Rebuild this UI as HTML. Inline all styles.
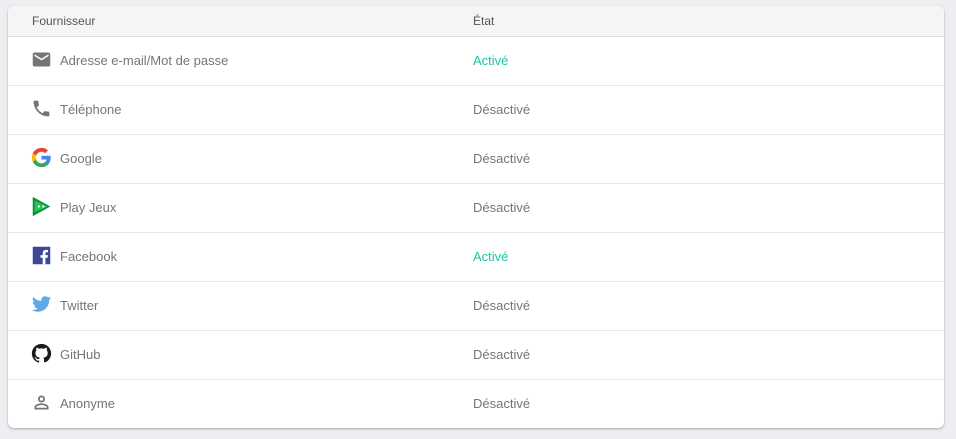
<!DOCTYPE html>
<html><head><style>
body{margin:0;background:#eceef1;font-family:"Liberation Sans",sans-serif;width:956px;height:439px;overflow:hidden}
.card{position:absolute;left:8px;top:6px;width:936px;height:422px;background:#fff;border-radius:6px;box-shadow:0 1px 2px rgba(0,0,0,.3);overflow:hidden}
.hd{height:30px;background:#f5f5f5;border-bottom:1px solid #ddd;font-size:12px;color:#555;position:relative}
.hd span{position:absolute;top:8px}
.row{height:48px;border-bottom:1px solid #e8e8e8;position:relative;font-size:13px;color:#757575}
.row:last-child{border-bottom:none}
.row svg{position:absolute;left:23px;top:12px;width:21px;height:21px}
.n{position:absolute;left:52px;top:16px}
.s{position:absolute;left:465px;top:16px}
.on{color:#1bc5a4}
</style></head><body>
<div class="card">
<div class="hd"><span style="left:24px">Fournisseur</span><span style="left:465px">État</span></div>
<div class="row"><svg viewBox="0 0 24 24"><path fill="#757575" d="M20 4H4c-1.1 0-2 .9-2 2v12c0 1.1.9 2 2 2h16c1.1 0 2-.9 2-2V6c0-1.1-.9-2-2-2zm0 4l-8 5-8-5V6l8 5 8-5v2z"/></svg><span class="n">Adresse e-mail/Mot de passe</span><span class="s on">Activé</span></div>
<div class="row"><svg viewBox="0 0 24 24"><path fill="#757575" d="M6.6 10.8c1.4 2.8 3.8 5.1 6.6 6.6l2.2-2.2c.3-.3.7-.4 1-.2 1.1.4 2.3.6 3.6.6.6 0 1 .4 1 1V20c0 .6-.4 1-1 1C10.6 21 3 13.4 3 4c0-.6.4-1 1-1h3.5c.6 0 1 .4 1 1 0 1.3.2 2.5.6 3.6.1.3 0 .7-.2 1L6.6 10.8z"/></svg><span class="n">Téléphone</span><span class="s">Désactivé</span></div>
<div class="row"><svg viewBox="0 0 24 24"><path fill="#4285F4" d="M22.5 12.2c0-.8-.1-1.5-.2-2.2H12v4.3h5.9c-.3 1.4-1 2.5-2.2 3.3v2.7h3.6c2-1.9 3.2-4.7 3.2-8.1z"/><path fill="#34A853" d="M12 23c3 0 5.5-1 7.3-2.7l-3.6-2.7c-1 .7-2.200 1.1-3.7 1.1-2.9 0-5.3-1.9-6.2-4.5H2.1v2.8C3.9 20.6 7.7 23 12 23z"/><path fill="#FBBC05" d="M5.8 14.2c-.2-.7-.4-1.4-.4-2.2s.1-1.5.4-2.2V7H2.1C1.4 8.5 1 10.2 1 12s.4 3.5 1.1 5l3.7-2.8z"/><path fill="#EA4335" d="M12 5.4c1.6 0 3.1.6 4.2 1.7l3.2-3.2C17.5 2.1 15 1 12 1 7.7 1 3.9 3.4 2.1 7l3.7 2.8C6.7 7.3 9.1 5.4 12 5.4z"/></svg><span class="n">Google</span><span class="s">Désactivé</span></div>
<div class="row"><svg viewBox="0 0 24 24"><path fill="#0a8a3a" d="M2 1l20 11L2 23z"/><path fill="#27c25a" d="M4 5l15 7-15 7z"/><circle cx="9" cy="12" r="1.3" fill="#fff"/><circle cx="14" cy="12" r="1.3" fill="#fff"/></svg><span class="n">Play Jeux</span><span class="s">Désactivé</span></div>
<div class="row"><svg viewBox="0 0 24 24"><rect x="2" y="2" width="20" height="20" fill="#3b4994"/><path fill="#fff" d="M16.5 22v-7.5h2.5l.4-3h-2.9V9.7c0-.8.3-1.4 1.4-1.4h1.6V5.6c-.3 0-1.2-.1-2.3-.1-2.3 0-3.8 1.4-3.8 3.9v2.1h-2.5v3h2.5V22z"/></svg><span class="n">Facebook</span><span class="s on">Activé</span></div>
<div class="row"><svg viewBox="0 0 24 24"><path fill="#5ea9e6" d="M23 4.6c-.8.4-1.7.6-2.6.7.9-.6 1.6-1.4 2-2.5-.9.5-1.9.9-2.9 1.1C18.7 3 17.5 2.5 16.2 2.5c-2.5 0-4.500 2-4.500 4.5 0 .4 0 .7.1 1C8 7.8 4.7 6 2.5 3.3c-.4.7-.6 1.4-.6 2.3 0 1.6.8 2.9 2 3.8-.7 0-1.4-.2-2-.6 0 2.2 1.6 4 3.6 4.4-.4.1-.8.2-1.2.2-.3 0-.6 0-.8-.1.6 1.8 2.2 3.1 4.2 3.1-1.5 1.2-3.5 1.9-5.6 1.9H1c2 1.3 4.4 2 6.9 2 8.3 0 12.8-6.9 12.8-12.8v-.6c.9-.6 1.7-1.4 2.3-2.3z"/></svg><span class="n">Twitter</span><span class="s">Désactivé</span></div>
<div class="row"><svg viewBox="0 0 24 24"><path fill="#1b1b1b" d="M12 1C5.9 1 1 5.9 1 12c0 4.9 3.2 9 7.5 10.4.6.1.8-.2.8-.5v-1.9c-3.1.7-3.7-1.5-3.7-1.5-.5-1.3-1.2-1.6-1.2-1.6-1-.7.1-.7.1-.7 1.1.1 1.7 1.1 1.7 1.1 1 1.7 2.6 1.2 3.2.9.1-.7.4-1.2.7-1.5-2.4-.3-5-1.2-5-5.4 0-1.2.4-2.2 1.1-2.9-.1-.3-.5-1.4.1-2.9 0 0 .9-.3 3 1.1.9-.2 1.8-.4 2.8-.4s1.9.1 2.8.4c2.1-1.4 3-1.1 3-1.1.6 1.5.2 2.6.1 2.9.7.8 1.1 1.7 1.1 2.9 0 4.2-2.6 5.1-5 5.4.4.3.8 1 .8 2v3c0 .3.2.6.8.5C19.8 21 23 16.9 23 12 23 5.9 18.1 1 12 1z"/></svg><span class="n">GitHub</span><span class="s">Désactivé</span></div>
<div class="row"><svg viewBox="0 0 24 24"><path fill="#757575" d="M12 6c1.1 0 2 .9 2 2s-.9 2-2 2-2-.9-2-2 .9-2 2-2m0 9c2.7 0 5.8 1.3 6 2v1H6v-1c.2-.7 3.3-2 6-2m0-11C9.8 4 8 5.8 8 8s1.8 4 4 4 4-1.8 4-4-1.8-4-4-4zm0 9c-2.7 0-8 1.3-8 4v3h16v-3c0-2.7-5.3-4-8-4z"/></svg><span class="n">Anonyme</span><span class="s">Désactivé</span></div>
</div>
</body></html>
